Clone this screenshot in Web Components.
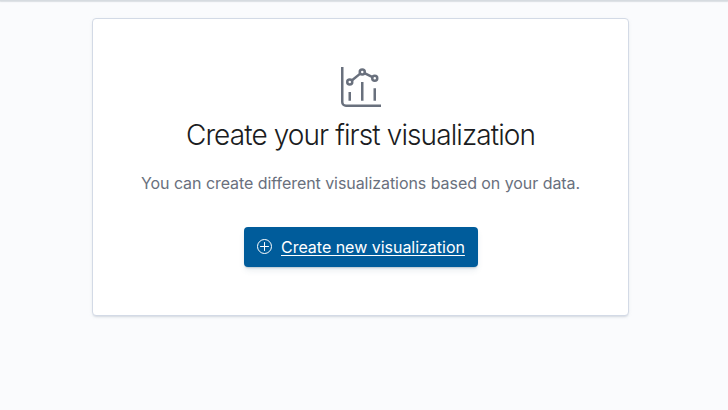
<!DOCTYPE html>
<html lang="en"><head><meta charset="utf-8"><title>Visualize</title>
<style>body{margin:0;background:#fafbfd;overflow:hidden;font-family:Inter,"Liberation Sans",sans-serif}</style></head>
<body>
<visualize-page><empty-prompt>
<chart-icon slot="icon"></chart-icon>
<span slot="title">Create your first visualization</span>
<span slot="body">You can create different visualizations based on your data.</span>
<fill-button slot="actions">Create new visualization</fill-button>
</empty-prompt></visualize-page>
<script>
function define(name, html) {
  const template = document.createElement('template');
  template.innerHTML = html;
  customElements.define(name, class extends HTMLElement {
    constructor() {
      super();
      this.attachShadow({ mode: 'open' }).append(template.content.cloneNode(true));
    }
  });
}
define('visualize-page', `<style>
:host{display:flex;flex-direction:column;height:410px;background:#fafbfd}
header{height:1px;flex:none;background:#d6dbe0;box-shadow:0 1px 1px rgba(152,162,172,.35)}
main{display:flex;justify-content:center;align-items:flex-start;padding:17px 7px 0 0}
</style><header></header><main><slot></slot></main>`);
define('empty-prompt', `<style>
:host{display:flex;flex-direction:column;align-items:center;box-sizing:border-box;width:537px;height:298px;padding-top:48px;background:#fff;border:1px solid #d3dae6;border-radius:4px;box-shadow:0 2px 2px -1px rgba(152,162,179,.3),0 1px 5px -2px rgba(152,162,179,.3)}
h2{margin:8px 0 0;font-size:28px;font-weight:270;line-height:40px;letter-spacing:-.9px;color:#1a1c21;white-space:nowrap}
p{margin:16px 0 0;font-size:16px;line-height:24px;letter-spacing:-.06px;color:#69707d;white-space:nowrap}
div{margin-top:32px}
</style><slot name="icon"></slot><h2><slot name="title"></slot></h2><p><slot name="body"></slot></p><div><slot name="actions"></slot></div>`);
define('chart-icon', `<style>:host{display:block;width:40px;height:40px}svg{display:block}</style>
<svg width="40" height="40" viewBox="0 0 32 32" fill="none" stroke="#69707d" stroke-width="2">
<path d="M1 0v28a3 3 0 0 0 3 3h28M7 20v7M17 12v15M27 17v10M8.6 10.8l6.8-5.5M18.8 4.9l6.4 3.2"/>
<circle cx="7" cy="12" r="2"/><circle cx="17" cy="4" r="2"/><circle cx="27" cy="9" r="2"/></svg>`);
define('fill-button', `<style>
:host{display:block}
button{display:flex;align-items:center;gap:8.5px;box-sizing:border-box;width:234px;height:40px;padding:0 13px;border:0;border-radius:4px;background:#005c9b;color:#fff;font:400 16px/40px Inter,"Liberation Sans",sans-serif;letter-spacing:-.02px;box-shadow:0 2px 2px -1px rgba(54,97,126,.3),0 4px 6px -1px rgba(54,97,126,.12);white-space:nowrap}
span{text-decoration:underline;text-decoration-thickness:1px;text-underline-offset:2px;text-decoration-skip-ink:none}
svg{display:block;flex:none}
</style><button><svg width="16" height="16" viewBox="0 0 16 16" fill="none" stroke="#fff"><circle cx="7.5" cy="7.5" r="7"/><path d="M7.5 3.5v8M3.5 7.5h8" stroke-linecap="round"/></svg><span><slot></slot></span></button>`);
</script></body></html>
